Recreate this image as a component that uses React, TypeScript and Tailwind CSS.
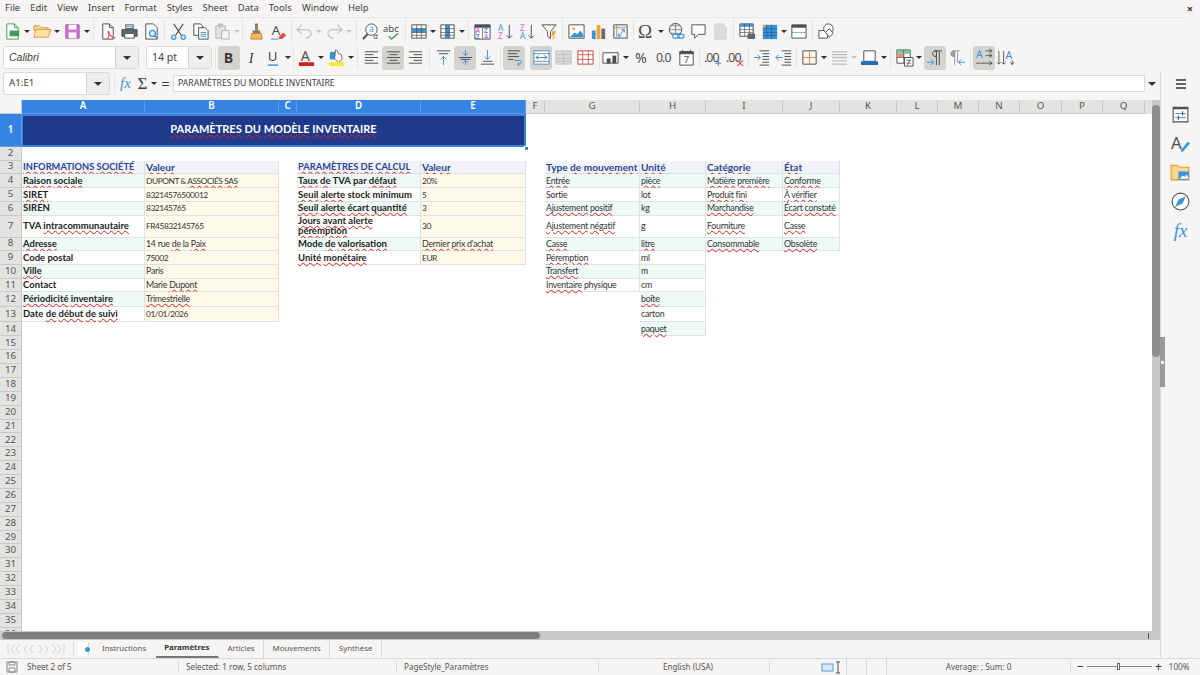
import type { ReactNode } from "react";

const G = "#4d4d4d";
const B = "#3a94d8";
const L = "#9a9a9a";

const lbl = { fontFamily: "Noto Sans, sans-serif" };

const icons: Record<string, ReactNode> = {
	new: (
		<>
			<path d="M4 2h8l4 4v12H4z" fill="#fff" stroke="#3f9c54" />
			<rect x="7" y="9" width="10" height="6" fill="#3f9c54" />
			<path d="M12 2v4h4" fill="none" stroke="#3f9c54" />
		</>
	),
	open: (
		<>
			<path d="M1 6V4h6l2 2h7v3H1z" fill="#fbd68e" stroke="#e09a3a" />
			<path d="M1 16l2-8h16l-3 8z" fill="#fde2a8" stroke="#e09a3a" />
		</>
	),
	save: (
		<>
			<path d="M3 3h14v14H3z" fill="#c976d2" stroke="#a84fb2" />
			<rect x="6" y="3" width="8" height="5" fill="#fff" />
			<rect x="6" y="11" width="8" height="6" fill="#fff" />
		</>
	),
	pdf: (
		<>
			<path d="M5 2h7l4 4v12H5z" fill="#fff" stroke={G} />
			<path d="M12 2v4h4" fill="none" stroke={G} />
			<path d="M10 18c2-4 2-7 1-8-1 1 1 5 7 7" fill="none" stroke="#e04a4a" strokeWidth="1.2" />
		</>
	),
	print: (
		<>
			<path d="M6 3h8v4H6z" fill="#fff" stroke={G} />
			<path d="M2 8h16v7H2z" fill="#5c6770" stroke={G} />
			<path d="M5 12h10v5H5z" fill="#fff" stroke={G} />
			<path d="M6 5h8" stroke={B} />
		</>
	),
	preview: (
		<>
			<path d="M4 2h8l4 4v12H4z" fill="#fff" stroke={G} />
			<circle cx="11" cy="12" r="3.2" fill="#d8eefb" stroke={B} strokeWidth="1.3" />
			<path d="M13.5 14.5l3 3" stroke={B} strokeWidth="1.5" />
		</>
	),
	cut: (
		<>
			<path d="M5 2l8 12M15 2L7 14" stroke={G} strokeWidth="1.2" fill="none" />
			<circle cx="5" cy="16" r="2.2" fill="none" stroke={B} strokeWidth="1.3" />
			<circle cx="15" cy="16" r="2.2" fill="none" stroke={B} strokeWidth="1.3" />
		</>
	),
	copy: (
		<>
			<path d="M3 2h7l2 2v10H3z" fill="#fff" stroke={G} />
			<path d="M8 6h7l3 3v9H8z" fill="#fff" stroke={G} />
			<path d="M10 11h6M10 13h6M10 15h6" stroke={B} />
		</>
	),
	paste: (
		<>
			<path d="M3 4h10v13H3z" fill="#e4e4e4" stroke="#b5b5b5" />
			<path d="M6 2h4v3H6z" fill="#c8c8c8" stroke="#b5b5b5" />
			<path d="M9 9h8v9H9z" fill="#f2f2f2" stroke="#b5b5b5" />
		</>
	),
	clone: (
		<>
			<path d="M9 2h2v7H9z" fill="#c97f2e" stroke={G} strokeWidth=".6" />
			<path d="M6 9h8v3H6z" fill="#777" />
			<path d="M5 12h10l1 6H4z" fill="#f4b860" stroke="#d0862b" />
		</>
	),
	clear: (
		<>
			<text x="3" y="14" fontSize="14" fill={G} style={lbl}>
				A
			</text>
			<path d="M10 16l5-5 3 3-4 4h-3z" fill="#e04a4a" />
			<path d="M2 18h8" stroke={B} />
		</>
	),
	undo: <path d="M7 3L2 8l5 4M2 8h9c4 0 6 2 6 4s-2 5-6 5" fill="none" stroke="#c4c4c4" strokeWidth="1.3" />,
	redo: <path d="M13 3l5 5-5 4M18 8H9c-4 0-6 2-6 4s2 5 6 5" fill="none" stroke="#c4c4c4" strokeWidth="1.3" />,
	find: (
		<>
			<circle cx="11" cy="8" r="6" fill="#fff" stroke={G} />
			<path d="M7 12.5L2 18" stroke={G} strokeWidth="2" />
			<text x="8.5" y="11" fontSize="9" fill={B} style={lbl}>
				a
			</text>
			<text x="13" y="18" fontSize="8" fill={G} style={lbl}>
				d
			</text>
		</>
	),
	spell: (
		<>
			<text x="0" y="10" fontSize="10" fill={G} style={lbl}>
				abc
			</text>
			<path d="M6 15l3 3 7-6" fill="none" stroke="#3fa85a" strokeWidth="1.5" />
		</>
	),
	rows: (
		<>
			<path d="M3 3h15v14H3z" fill="#fff" stroke={G} />
			<rect x="3" y="7" width="15" height="4" fill={B} />
			<path d="M3 7h15M3 11h15M3 14h15M8 3v14M13 3v14" stroke={G} strokeWidth=".7" />
		</>
	),
	cols: (
		<>
			<path d="M3 3h14v14H3z" fill="#fff" stroke={G} />
			<rect x="8" y="3" width="4" height="14" fill={B} />
			<path d="M3 7h14M3 11h14M3 14h14M8 3v14M12 3v14" stroke={G} strokeWidth=".7" />
		</>
	),
	sort: (
		<>
			<path d="M2 3h16v15H2z" fill="#fff" stroke={G} />
			<path d="M2 3h16v3H2z" fill={G} />
			<path d="M10 6v12" stroke={G} strokeWidth=".7" />
			<text x="3" y="12" fontSize="6.5" fontWeight="700" fill="#d26fd5" style={lbl}>
				A
			</text>
			<text x="3" y="18" fontSize="6.5" fontWeight="700" fill={B} style={lbl}>
				Z
			</text>
			<text x="11.5" y="12" fontSize="6.5" fontWeight="700" fill={B} style={lbl}>
				Z
			</text>
			<text x="11.5" y="18" fontSize="6.5" fontWeight="700" fill="#d26fd5" style={lbl}>
				A
			</text>
		</>
	),
	asc: (
		<>
			<text x="2" y="9" fontSize="8.5" fill={B} style={lbl}>
				A
			</text>
			<text x="2" y="18" fontSize="8.5" fill="#d26fd5" style={lbl}>
				Z
			</text>
			<path d="M14 3v14M11 14l3 3 3-3" fill="none" stroke={G} />
		</>
	),
	desc: (
		<>
			<text x="2" y="9" fontSize="8.5" fill="#d26fd5" style={lbl}>
				Z
			</text>
			<text x="2" y="18" fontSize="8.5" fill={B} style={lbl}>
				A
			</text>
			<path d="M14 3v14M11 14l3 3 3-3" fill="none" stroke={G} />
		</>
	),
	filter: (
		<>
			<path d="M2 3h15l-6 7v7l-3-2v-5z" fill="#fff" stroke={G} />
			<path d="M13 9l4 1-3 6 3-1-4 4 1-5-2 1z" fill="#eda63a" />
		</>
	),
	image: (
		<>
			<path d="M2 3h16v14H2z" fill="#fff" stroke={G} />
			<circle cx="7" cy="7" r="1.6" fill="#eda63a" />
			<path d="M3 16l5-5 3 2 3-4 3 4v3z" fill={B} />
		</>
	),
	chart: (
		<>
			<rect x="3" y="9" width="4" height="9" fill={B} />
			<rect x="8" y="3" width="4" height="15" fill="#eda63a" />
			<rect x="13" y="7" width="4" height="11" fill="#6b6b6b" />
		</>
	),
	pivot: (
		<>
			<path d="M3 3h14v14H3z" fill="#f4f4f4" stroke={G} />
			<path d="M3 6h14M6 3v14" stroke={L} />
			<path d="M8 15l6-7M14 8h-3M14 8v3M8 15h3M8 15v-3" fill="none" stroke={B} />
		</>
	),
	omega: (
		<text x="1" y="17" fontSize="20" fill={G} style={{ fontFamily: "Liberation Serif, serif" }}>
			Ω
		</text>
	),
	link: (
		<>
			<circle cx="9" cy="8" r="6.5" fill="none" stroke={G} />
			<path d="M2.5 8h13M9 1.500v13M4 4h10M4 12h10" stroke={G} strokeWidth=".6" />
			<rect x="6" y="13" width="7" height="4" rx="2" fill="#fff" stroke={B} strokeWidth="1.2" />
			<rect x="11" y="13" width="7" height="4" rx="2" fill="none" stroke={B} strokeWidth="1.2" />
		</>
	),
	comment: <path d="M3 3h14v10h-7l-4 4v-4H3z" fill="#fff" stroke={G} />,
	headers: <path d="M4 2h8l4 4v12H4z" fill="#dcdcdc" stroke="#cfcfcf" />,
	freezeP: (
		<>
			<path d="M2 2h14v13H2z" fill="#fff" stroke={G} />
			<rect x="2" y="2" width="14" height="3" fill={B} />
			<path d="M2 8h14M2 11h14M7 2v13M12 2v13" stroke={G} strokeWidth=".7" />
			<rect x="10" y="12" width="8" height="6" rx="1" fill="#5c6770" />
		</>
	),
	freeze: (
		<>
			<rect x="3" y="3" width="15" height="15" fill={B} />
			<path d="M3 7h15M3 11h15M3 14h15M7 3v15M12 3v15" stroke="#1b5e96" strokeWidth=".7" />
			<rect x="3" y="3" width="3" height="3" fill="#eda63a" />
		</>
	),
	split: (
		<>
			<path d="M3 3h15v14H3z" fill="#fff" stroke={G} />
			<rect x="3" y="3" width="15" height="3" fill={G} />
			<path d="M3 11h15" stroke={B} strokeDasharray="2 1" />
		</>
	),
	shapes: (
		<>
			<path d="M2 9h9v8H2z" fill="#fff" stroke={G} />
			<circle cx="12" cy="7" r="5" fill="#fff" stroke={G} />
			<path d="M9 11l4-4 4 5-4 4z" fill="#fff" stroke={G} />
		</>
	),
	bold: (
		<text x="4" y="16" fontSize="15" fontWeight="700" fill="#3d3d3d" style={lbl}>
			B
		</text>
	),
	italic: (
		<text x="7" y="16" fontSize="15" fontStyle="italic" fill="#3d3d3d" style={{ fontFamily: "Liberation Serif, serif" }}>
			I
		</text>
	),
	under: (
		<>
			<text x="4" y="14" fontSize="14" fill={G} style={lbl}>
				U
			</text>
			<path d="M4 18h11" stroke={B} strokeWidth="1.5" />
		</>
	),
	color: (
		<>
			<text x="4" y="14" fontSize="15" fill={G} style={lbl}>
				A
			</text>
			<rect x="2" y="15" width="16" height="4" fill="#c9211e" />
		</>
	),
	high: (
		<>
			<path d="M3 4h8v8H3z" fill={B} />
			<path d="M9 2l2 1 1 3 3 1 1 5-4 3-4-4z" fill="#fff" stroke={G} strokeWidth=".8" />
			<rect x="2" y="15" width="16" height="4" fill="#f7ee2b" />
		</>
	),
	left: <path d="M3 4h14M3 7h9M3 10h14M3 13h9M3 16h14" stroke={G} />,
	center: <path d="M3 4h14M6 7h8M3 10h14M6 13h8M3 16h14" stroke={G} />,
	right: <path d="M3 4h14M8 7h9M3 10h14M8 13h9M3 16h14" stroke={G} />,
	top: (
		<>
			<path d="M3 3h14M5 6h10" stroke={G} />
			<path d="M10 18V9M7 12l3-3 3 3" fill="none" stroke={B} />
		</>
	),
	mid: (
		<>
			<path d="M3 10h14M5 12h10" stroke={G} />
			<path d="M10 2v6M7 5l3 3 3-3M10 18v-5M7 16l3-3 3 3" fill="none" stroke={B} />
		</>
	),
	bottom: (
		<>
			<path d="M3 17h14M5 14h10" stroke={G} />
			<path d="M10 2v10M7 9l3 3 3-3" fill="none" stroke={B} />
		</>
	),
	wrap: (
		<>
			<path d="M3 3h13M3 6h10M3 9h12M3 12h6" stroke={G} />
			<path d="M10 13h5c3 0 3 4 0 4h-2M15 15l-2 2 2 2" fill="none" stroke={B} />
		</>
	),
	merge: (
		<>
			<path d="M2 3h16v14H2z" fill="#fff" stroke={B} />
			<path d="M2 6h16M2 14h16" stroke={G} strokeWidth=".7" />
			<path d="M4 10h12M7 8l-3 2 3 2M13 8l3 2-3 2" fill="none" stroke={B} />
		</>
	),
	mergeOff: (
		<>
			<path d="M2 3h16v14H2z" fill="#dcdcdc" stroke="#c0c0c0" />
			<path d="M2 7h16M2 11h16M2 14h16M10 3v14" stroke="#c0c0c0" />
		</>
	),
	split2: (
		<>
			<path d="M2 3h16v14H2z" fill="#fff" stroke="#c9403d" />
			<path d="M2 7h16M2 12h16M7 3v14M13 3v14" stroke="#c9403d" strokeWidth=".8" />
		</>
	),
	currency: (
		<>
			<path d="M1 5h16v11H1z" fill="#fff" stroke={G} />
			<rect x="5" y="11" width="4" height="5" fill={G} />
			<rect x="11" y="8" width="4" height="8" fill={G} />
		</>
	),
	percent: (
		<text x="2" y="16" fontSize="15" fill={G} style={lbl}>
			%
		</text>
	),
	number: (
		<text x="1" y="15" fontSize="13" fill={G} style={lbl} letterSpacing="-1">
			0.0
		</text>
	),
	date: (
		<>
			<path d="M3 4h14v14H3z" fill="#fff" stroke={G} />
			<path d="M3 4h14v2H3zM6 2v3M14 2v3" fill={G} stroke={G} />
			<text x="7" y="16" fontSize="10" fill={G} style={lbl}>
				7
			</text>
		</>
	),
	addDec: (
		<>
			<text x="0" y="15" fontSize="13" fill={G} style={lbl} letterSpacing="-1">
				.00
			</text>
			<path d="M15 13v6M12 16h6" stroke={B} strokeWidth="1.2" />
		</>
	),
	delDec: (
		<>
			<text x="0" y="15" fontSize="13" fill={G} style={lbl} letterSpacing="-1">
				.00
			</text>
			<path d="M12 13l6 6M18 13l-6 6" stroke="#e04a4a" strokeWidth="1.2" />
		</>
	),
	indent: (
		<>
			<path d="M8 3h10M11 6h7M11 9h7M11 12h7M11 15h7M8 18h10" stroke={G} />
			<path d="M2 10h7M6 7l3 3-3 3" fill="none" stroke={B} />
		</>
	),
	outdent: (
		<>
			<path d="M8 3h10M11 6h7M11 9h7M11 12h7M11 15h7M8 18h10" stroke={G} />
			<path d="M2 10h7M5 7l-3 3 3 3" fill="none" stroke={B} />
		</>
	),
	borders: (
		<>
			<path d="M3 3h14v14H3z" fill="none" stroke={G} />
			<path d="M10 3v14M3 10h14" stroke="#d98a3c" />
		</>
	),
	bStyle: <path d="M2 4h16M2 7h16M2 10h16M2 13.500h16M2 17h16" stroke="#bdbdbd" strokeWidth="1.4" />,
	bColor: (
		<>
			<path d="M4 3h12v11H4z" fill="#fff" stroke={G} />
			<rect x="1" y="14" width="18" height="4" rx="1" fill="#1f6fb2" />
		</>
	),
	cond: (
		<>
			<path d="M2 2h14v14H2z" fill="#fff" stroke={G} />
			<path d="M2 2h14v4H2z" fill="#7cc28c" />
			<path d="M2 6h8v4H2z" fill="#ef8d86" />
			<path d="M2 10h14M9 2v14" stroke={G} strokeWidth=".6" />
			<path d="M10 10h9v9h-9z" fill="#fff" stroke={G} />
			<path d="M12 13h5M12 16h5M13 18l3-6" stroke={G} strokeWidth=".8" />
		</>
	),
	ltr: (
		<>
			<path d="M9 3h8M11 3c-3 0-4 1-4 3s1 3 4 3zM11 3v15M14 3v15" fill="none" stroke={G} />
			<path d="M1 15h7M5 12l3 3-3 3" fill="none" stroke={B} />
		</>
	),
	rtl: (
		<>
			<path d="M5 3h8M7 3C4 3 3 4 3 6s1 3 4 3zM7 3v15M10 3v12" fill={L} stroke={L} />
			<path d="M11 15h7M14 12l-3 3 3 3" fill="none" stroke={B} />
		</>
	),
	hText: (
		<>
			<text x="1" y="11" fontSize="11" fill={B} style={lbl}>
				A
			</text>
			<path d="M11 3h7M11 8h7M1 16h17M15 1l3 2-3 2M15 6l3 2-3 2M15 14l3 2-3 2" fill="none" stroke={G} strokeWidth=".9" />
		</>
	),
	vText: (
		<>
			<text x="9" y="12" fontSize="11" fill={B} style={lbl}>
				A
			</text>
			<path d="M2 3v14M7 3v14M16 13v5M0 15l2 2 2-2M5 15l2 2 2-2M14 15l2 2 2-2" fill="none" stroke={G} strokeWidth=".9" />
		</>
	),
};

function Ic({ n, w = "w-[22px]", on }: { n: string; w?: string; on?: boolean }) {
	return (
		<div className={`flex h-[24px] items-center justify-center rounded-[3px] ${w} ${on ? "bg-[#d5d3d0]" : ""}`}>
			<svg width="19" height="19" viewBox="0 0 20 20">
				{icons[n]}
			</svg>
		</div>
	);
}

function Dd({ w = "w-[8px]", off }: { w?: string; off?: boolean }) {
	return (
		<div className={`flex justify-center ${w}`}>
			<div className={`h-0 w-0 border-x-[3px] border-t-[3px] border-x-transparent ${off ? "border-t-[#c4c4c4]" : "border-t-[#2e2e2e]"}`} />
		</div>
	);
}

function Sep({ w = "w-[5px]" }: { w?: string }) {
	return (
		<div className={`flex h-[22px] justify-center ${w}`}>
			<div className="h-full w-px bg-[#e6e4e1]" />
		</div>
	);
}

function ComboArrow({ w }: { w: string }) {
	return (
		<div className={`flex h-full items-center justify-center border-l border-[#d5d3d0] bg-[#efeeec] ${w}`}>
			<div className="h-0 w-0 border-x-[4px] border-t-[4px] border-x-transparent border-t-[#333]" />
		</div>
	);
}

// *word* gets the red spell check underline
function Spell({ text }: { text: string }) {
	return (
		<>
			{text.split(/(\*[^*]+\*)/).map((part, i) =>
				part.startsWith("*") ? (
					<span key={i} className="underline decoration-[#e0201b] decoration-wavy decoration-[1px] underline-offset-[1px]">
						{part.slice(1, -1)}
					</span>
				) : (
					<span key={i}>{part}</span>
				),
			)}
		</>
	);
}

type Tone = "h" | "t" | "w" | "y";
type Cell = { s: string; tone: Tone; bold?: boolean };

const toneClass: Record<Tone, string> = {
	h: "bg-[#f1f3f6] text-[#2a4597] font-bold",
	t: "bg-[#eefaf8]",
	w: "bg-white",
	y: "bg-[#fefaea]",
};

const sheet: Record<number, Record<string, string>> = {
	3: { A: "*INFORMATIONS* *SOCIÉTÉ*", B: "*Valeur*", D: "*PARAMÈTRES* *DE* *CALCUL*", E: "*Valeur*", G: "Type *de* *mouvement*", H: "*Unité*", I: "*Catégorie*", J: "*État*" },
	4: { A: "*Raison* *sociale*", B: "DUPONT & *ASSOCIÉS* *SAS*", D: "*Taux* *de* TVA par *défaut*", E: "20%", G: "*Entrée*", H: "*pièce*", I: "*Matière* *première*", J: "*Conforme*" },
	5: { A: "*SIRET*", B: "83214576500012", D: "*Seuil* *alerte* stock minimum", E: "5", G: "Sortie", H: "lot", I: "*Produit* *fini*", J: "*À* *vérifier*" },
	6: { A: "SIREN", B: "832145765", D: "*Seuil* *alerte* *écart* *quantité*", E: "3", G: "*Ajustement* *positif*", H: "kg", I: "*Marchandise*", J: "*Écart* *constaté*" },
	7: { A: "TVA *intracommunautaire*", B: "FR45832145765", D: "*Jours* *avant* *alerte* *péremption*", E: "30", G: "*Ajustement* *négatif*", H: "g", I: "*Fourniture*", J: "*Casse*" },
	8: { A: "*Adresse*", B: "14 rue *de* la *Paix*", D: "Mode *de* *valorisation*", E: "*Dernier* *prix* *d'achat*", G: "*Casse*", H: "*litre*", I: "*Consommable*", J: "*Obsolète*" },
	9: { A: "Code postal", B: "75002", D: "*Unité* *monétaire*", E: "EUR", G: "*Péremption*", H: "ml" },
	10: { A: "*Ville*", B: "Paris", G: "*Transfert*", H: "m" },
	11: { A: "Contact", B: "Marie *Dupont*", G: "*Inventaire* physique", H: "cm" },
	12: { A: "*Périodicité* *inventaire*", B: "*Trimestrielle*", H: "*boîte*" },
	13: { A: "Date *de* *début* *de* *suivi*", B: "01/01/2026", H: "carton" },
	14: { H: "*paquet*" },
};

const cols = ["A", "B", "C", "D", "E", "F", "G", "H", "I", "J", "K", "L", "M", "N", "O", "P", "Q"];

function cellFor(col: string, row: number): Cell | null {
	const s = sheet[row]?.[col];
	if (s === undefined) return null;
	if (row === 3) return { s, tone: "h" };
	const stripe: Tone = row % 2 === 0 ? "t" : "w";
	if (col === "A" || col === "D") return { s, tone: stripe, bold: true };
	if (col === "B" || col === "E") return { s, tone: "y" };
	return { s, tone: stripe };
}

function sizeClass(cell: Cell) {
	const noLower = !/[a-zàéèêîô]/.test(cell.s);
	if (cell.tone === "h") return noLower ? "text-[9.3px]" : "text-[10.1px]";
	if (cell.bold) return "text-[9.5px] font-bold text-[#222]";
	return noLower ? "text-[8.4px] tracking-[-0.45px]" : "text-[8.8px] tracking-[-0.25px]";
}

const menu = ["File", "Edit", "View", "Insert", "Format", "Styles", "Sheet", "Data", "Tools", "Window", "Help"];

const tabs = ["Instructions", "Paramètres", "Articles", "Mouvements", "Synthèse"];

export default function App() {
	const rows = Array.from({ length: 36 }, (_, i) => i + 1);
	return (
		<div className="flex h-[675px] w-[1200px] flex-col overflow-hidden bg-[#f6f5f4] font-['Noto_Sans',sans-serif] text-[#3d3d3d]">
			{/* menu bar */}
			<div className="flex h-[17px] shrink-0 items-center justify-between pl-[5px] pr-[7px] text-[9.5px]">
				<div className="flex gap-[10px]">
					{menu.map((m) => (
						<span key={m}>{m}</span>
					))}
				</div>
				<span className="text-[11px] font-bold leading-none">×</span>
			</div>
			<div className="mr-[16px] h-px shrink-0 bg-[#e9e7e4]" />

			{/* standard toolbar */}
			<div className="flex h-[26px] shrink-0 items-center pl-px">
				<Ic n="new" />
				<Dd />
				<Ic n="open" />
				<Dd />
				<Ic n="save" />
				<Dd />
				<Sep />
				<Ic n="pdf" />
				<Ic n="print" />
				<Ic n="preview" />
				<Sep />
				<Ic n="cut" />
				<Ic n="copy" />
				<Ic n="paste" />
				<Dd w="w-[7px]" off />
				<Sep />
				<Ic n="clone" />
				<Ic n="clear" />
				<Sep w="w-[4px]" />
				<Ic n="undo" />
				<Dd off />
				<Ic n="redo" />
				<Dd off />
				<Sep w="w-[6px]" />
				<Ic n="find" />
				<Ic n="spell" />
				<Sep w="w-[4px]" />
				<Ic n="rows" />
				<Dd w="w-[7px]" />
				<Ic n="cols" />
				<Dd w="w-[7px]" />
				<Sep w="w-[6px]" />
				<Ic n="sort" />
				<div className="w-px" />
				<Ic n="asc" />
				<Ic n="desc" />
				<Ic n="filter" />
				<Sep />
				<Ic n="image" />
				<Ic n="chart" />
				<Ic n="pivot" />
				<Sep w="w-[4px]" />
				<Ic n="omega" />
				<Dd />
				<Ic n="link" />
				<Ic n="comment" />
				<Ic n="headers" />
				<Sep />
				<Ic n="freezeP" />
				<Ic n="freeze" />
				<Dd w="w-[7px]" />
				<Ic n="split" />
				<Sep w="w-[6px]" />
				<Ic n="shapes" />
			</div>

			{/* formatting toolbar */}
			<div className="flex h-[27px] shrink-0 items-center pl-[3px]">
				<div className="flex h-[23px] w-[136px] overflow-hidden rounded-[3px] border border-[#dcdad7] bg-white">
					<div className="flex flex-1 items-center pl-[5px] font-['Liberation_Sans',sans-serif] text-[10.5px] italic">Calibri</div>
					<ComboArrow w="w-[23px]" />
				</div>
				<div className="ml-[7px] flex h-[23px] w-[66px] overflow-hidden rounded-[3px] border border-[#dcdad7] bg-white">
					<div className="flex flex-1 items-center pl-[5px] text-[10.5px]">14 pt</div>
					<ComboArrow w="w-[23px]" />
				</div>
				<Sep w="w-[6px]" />
				<Ic n="bold" on />
				<Ic n="italic" />
				<Ic n="under" />
				<Dd w="w-[7px]" />
				<Sep w="w-[4px]" />
				<Ic n="color" />
				<Dd />
				<Ic n="high" />
				<Dd />
				<Sep />
				<Ic n="left" />
				<Ic n="center" on />
				<Ic n="right" />
				<Sep w="w-[6px]" />
				<Ic n="top" />
				<Ic n="mid" on />
				<Ic n="bottom" />
				<Sep />
				<Ic n="wrap" on />
				<div className="w-[5px]" />
				<Ic n="merge" on />
				<Ic n="mergeOff" />
				<Ic n="split2" />
				<Sep w="w-[6px]" />
				<Ic n="currency" w="w-[19px]" />
				<Dd w="w-[10px]" />
				<Ic n="percent" />
				<Ic n="number" />
				<Ic n="date" />
				<Sep w="w-[5px]" />
				<Ic n="addDec" />
				<Ic n="delDec" />
				<Sep w="w-[4px]" />
				<Ic n="indent" />
				<Ic n="outdent" />
				<Sep w="w-[4px]" />
				<Ic n="borders" />
				<Dd />
				<Ic n="bStyle" />
				<Dd off />
				<Ic n="bColor" />
				<Dd />
				<Sep w="w-[5px]" />
				<Ic n="cond" />
				<Dd w="w-[7px]" />
				<div className="w-[2px]" />
				<Ic n="ltr" on />
				<Ic n="rtl" />
				<Sep w="w-[5px]" />
				<Ic n="hText" on />
				<Ic n="vText" />
			</div>

			<div className="flex min-h-0 flex-1">
				<div className="relative flex w-[1161px] min-w-0 flex-col border-r border-[#dcdad7]">
					{/* formula bar */}
					<div className="flex h-[29px] shrink-0 items-center pb-[4px] pl-[3px]">
						<div className="flex h-[23px] w-[107px] overflow-hidden rounded-[3px] border border-[#dcdad7] bg-white">
							<div className="flex flex-1 items-center pl-[5px] text-[9.75px]">A1:E1</div>
							<ComboArrow w="w-[23px]" />
						</div>
						<div className="ml-[4px] h-[20px] w-px bg-[#e6e4e1]" />
						<span className="ml-[5px] w-[16px] font-['Liberation_Serif',serif] text-[15px] italic text-[#3a94d8]">fx</span>
						<span className="w-[13px] text-center font-['Liberation_Serif',serif] text-[17px] leading-none">Σ</span>
						<div className="flex w-[9px] justify-center">
							<div className="h-0 w-0 border-x-[3px] border-t-[3px] border-x-transparent border-t-[#2e2e2e]" />
						</div>
						<span className="w-[15px] text-center text-[15px] leading-none">=</span>
						<div className="flex h-[17px] w-[972px] shrink-0 items-center border border-[#dcdad7] bg-white pl-[4px] text-[8.65px]">
							PARAMÈTRES DU MODÈLE INVENTAIRE
						</div>
						<div className="flex w-[14px] justify-center">
							<div className="h-0 w-0 border-x-[4px] border-t-[4px] border-x-transparent border-t-[#333]" />
						</div>
					</div>

					{/* sheet with vertical scrollbar */}
					<div className="flex min-h-0 flex-1">
						<div className="relative grid min-h-0 w-[1152px] grid-cols-[22px_123px_134px_18px_124px_105px_19px_95px_66px_77px_57px_57px_41px_41px_41px_42px_41px_42px_7px] grid-rows-[14px_33px_13.5px_13.5px_14px_14px_13.5px_22px_13.5px_14px_13.7px_13.8px_14.2px_15.8px_14px_repeat(22,13.86px)] overflow-hidden bg-white font-['Lato',sans-serif] text-[8.4px] text-[#333]">
							<div className="border-b border-r border-[#c9c9c7] bg-[#f6f5f4]" />
							{cols.map((c, i) => (
								<div
									key={c}
									className={`flex items-center justify-center border-b border-r font-['Noto_Sans',sans-serif] text-[9.75px] ${
										i < 5
											? "border-[#5d9be6] bg-[#3584e4] font-semibold text-white"
											: "border-[#c9c9c7] bg-[#e3e3e1] text-[#555]"
									}`}
								>
									{c}
								</div>
							))}
							<div className="bg-[#e3e3e1]" />
							{rows.map((r) => (
								<div key={r} className="contents">
									<div
										className={`flex items-center justify-center border-b border-r font-['Noto_Sans',sans-serif] text-[9.75px] ${
											r === 1
												? "border-[#5d9be6] bg-[#3584e4] font-semibold text-white"
												: "border-[#c9c9c7] bg-[#e3e3e1] text-[#555]"
										}`}
									>
										{r}
									</div>
									{r === 1 ? (
										<>
											<div className="col-span-5 flex items-center justify-center border-y-2 border-r-2 border-l border-[#3b82d8] bg-[#1f3a8a] pb-[2px] text-[11px] font-bold text-white">
												<div className="whitespace-pre">
													<Spell text="*PARAMÈTRES* *DU* *MODÈLE* *INVENTAIRE*" />
												</div>
											</div>
											<div className="col-span-13" />
										</>
									) : (
										[...cols, "-"].map((c) => {
											const cell = cellFor(c, r);
											if (!cell) return <div key={c} />;
											const wraps = r === 7 && c === "D";
											return (
												<div
													key={c}
													className={`flex items-center border-b border-r border-[#dfe3e6] pl-[1px] leading-[10px] ${toneClass[cell.tone]} ${sizeClass(cell)}`}
												>
													<div className={wraps ? "" : "whitespace-nowrap"}>
														<Spell text={cell.s} />
													</div>
												</div>
											);
										})
									)}
								</div>
							))}
							<div className="absolute left-[524px] top-[46px] h-[5px] w-[5px] border border-white bg-[#3b82d8]" />
						</div>
						<div className="flex w-[8px] shrink-0 flex-col bg-[#c8c8c8]">
							<div className="h-[5px]" />
							<div className="h-[252px] rounded-[4px] bg-[#8e8e8e]" />
						</div>
					</div>

					{/* horizontal scrollbar */}
					<div className="flex h-[9px] shrink-0 items-center justify-between bg-[#c9c9c9] pl-[2px] pr-[11px]">
						<div className="h-[7px] w-[538px] rounded-[4px] bg-[#7f7f7f]" />
						<div className="h-[6px] w-px bg-[#555]" />
					</div>

					{/* sheet tabs */}
					<div className="flex h-[18px] shrink-0 items-center text-[7.85px] text-[#555]">
						<svg className="ml-[6px]" width="60" height="14" viewBox="0 0 60 14">
							<path
								d="M2 2v10M9 2L5 7l4 5M14 2l-4 5 4 5M21 3l-3 4 3 4M27 3l-3 4 3 4M33 3l3 4-3 4M39 3l3 4-3 4M46 2l4 5-4 5M51 2l4 5-4 5M58 2v10"
								fill="none"
								stroke="#d4d2cf"
							/>
						</svg>
						<div className="ml-[7px] h-[14px] w-px bg-[#dcdad7]" />
						<div className="ml-[4px] flex h-[14px] w-[11px] items-center justify-end border-r border-[#dcdad7] bg-white">
							<div className="mr-[-2px] h-[5px] w-[5px] rounded-full bg-[#3a94d8]" />
						</div>
						<div className="ml-[4.500px] flex">
							{tabs.map((t, i) => (
								<div
									key={t}
									className={`flex h-[18px] items-center border-r px-[8.5px] ${
										t === "Paramètres"
											? "border-b-2 border-r-transparent border-b-[#777] font-bold text-[#333]"
											: i === 0
												? "border-transparent"
												: "border-[#dcdad7]"
									}`}
								>
									{t}
								</div>
							))}
						</div>
					</div>

					{/* sidebar collapse handle */}
					<div className="absolute right-[-5px] top-[266px] flex h-[50px] w-[5px] flex-col items-center justify-center bg-[#999]">
						<div className="h-[3px] w-[3px] bg-white" />
					</div>
				</div>

				{/* sidebar */}
				<div className="flex w-[39px] flex-col items-center gap-[8px] pt-[3px]">
					<svg width="20" height="20" viewBox="0 0 20 20">
						<path d="M5 6h10M5 10h10M5 14h10" stroke="#333" strokeWidth="1.6" />
					</svg>
					<svg className="mt-[2px]" width="21" height="21" viewBox="0 0 20 20">
						<path d="M3 3h14v14H3z" fill="#fff" stroke={G} />
						<rect x="3" y="3" width="14" height="2" fill={G} />
						<path d="M5 9h10M5 13h10" stroke={B} />
						<path d="M12 7v4M8 11v4" stroke={G} />
					</svg>
					<svg width="21" height="21" viewBox="0 0 20 20">
						<text x="1" y="15" fontSize="16" fill={G} style={lbl}>
							A
						</text>
						<path d="M10 17l7-9 2 2-7 8z" fill={B} />
					</svg>
					<svg width="21" height="21" viewBox="0 0 20 20">
						<path d="M1 17V3h6l2 2h9v12z" fill="#fbd68e" stroke="#e09a3a" />
						<rect x="8" y="9" width="10" height="8" fill={B} />
						<path d="M9 16l3-3 2 1 2-2 2 4z" fill="#fff" />
					</svg>
					<svg width="21" height="21" viewBox="0 0 20 20">
						<circle cx="10" cy="10" r="8" fill="#fff" stroke={G} />
						<path d="M15 5l-3 7-7 3 3-7z" fill={B} />
					</svg>
					<span className="mt-[1px] font-['Liberation_Serif',serif] text-[19px] italic leading-none text-[#3a94d8]">fx</span>
				</div>
			</div>

			{/* status bar */}
			<div className="flex h-[17px] shrink-0 items-center border-t border-[#dcdad7] text-[8.1px] text-[#555]">
				<div className="flex w-[179px] items-center border-r border-[#dcdad7]">
					<svg className="ml-[6px]" width="12" height="12" viewBox="0 0 12 12">
						<path d="M1 1h10v10H1z" fill="none" stroke="#8a8a8a" />
						<path d="M3 1h6v3H3zM3 7h6v4H3z" fill="none" stroke="#8a8a8a" />
					</svg>
					<span className="ml-[9px]">Sheet 2 of 5</span>
				</div>
				<div className="w-[218px] border-r border-[#dcdad7] pl-[7px]">Selected: 1 row, 5 columns</div>
				<div className="w-[201px] pl-[7px]">PageStyle_Paramètres</div>
				<div className="w-[172px] border-x border-[#dcdad7] pl-[64px]">English (USA)</div>
				<div className="flex h-[16px] w-[77px] items-center justify-end border-r border-[#dcdad7] pr-[3px]">
					<svg width="22" height="13" viewBox="0 0 22 13">
						<rect x="1" y="3" width="11" height="7" fill="#d7eaf8" stroke="#5a9bd0" />
						<path d="M17 1v11M15 1h4M15 12h4" stroke={G} />
					</svg>
				</div>
				<div className="h-[16px] w-[20px] border-r border-[#dcdad7]" />
				<div className="h-[16px] w-[20px] border-r border-[#dcdad7]" />
				<div className="w-[184px] border-r border-[#dcdad7] text-center">Average: ; Sum: 0</div>
				<div className="flex flex-1 items-center">
					<span className="ml-[6px] text-[12px] leading-none text-[#333]">−</span>
					<div className="relative ml-[3px] h-px w-[65px] bg-[#888]">
						<div className="absolute left-[30px] top-[-3px] h-[7px] w-[3px] border border-[#666] bg-white" />
					</div>
					<span className="ml-[3px] text-[12px] leading-none text-[#333]">+</span>
					<span className="ml-[7px]">100%</span>
				</div>
			</div>
		</div>
	);
}
